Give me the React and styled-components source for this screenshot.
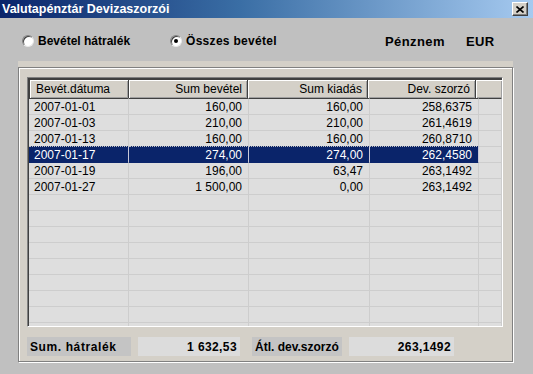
import React from 'react';
import styled, { createGlobalStyle } from 'styled-components';

const GlobalStyle = createGlobalStyle`
  * {
    margin: 0;
    padding: 0;
    box-sizing: border-box;
  }

  body {
    background: #c0c0c0;
    font-family: 'Liberation Sans', Arial, sans-serif;
  }
`;

const Window = styled.div`
  width: 533px;
  height: 374px;
  background: #c0c0c0;
  display: flex;
  flex-direction: column;
  overflow: hidden;
`;

const TitleBar = styled.div`
  height: 18px;
  background: linear-gradient(90deg, #0a246a 0%, #3a6ea5 45%, #a6caf0 100%);
  display: flex;
  align-items: center;
  justify-content: space-between;
  padding: 0 5px 0 2px;
  color: #fff;
  font-weight: bold;
  font-size: 12.5px;
`;

const CloseButton = styled.div`
  width: 16px;
  height: 14px;
  background: #d4d0c8;
  border: 1px solid;
  border-color: #fff #404040 #404040 #fff;
  box-shadow: inset -1px -1px 0 #808080;
  display: flex;
  align-items: center;
  justify-content: center;
`;

const Body = styled.div`
  flex: 1;
  display: flex;
  flex-direction: column;
  padding: 15px 0 0 18px;
`;

const RadioRow = styled.div`
  height: 16px;
  display: flex;
  align-items: center;
  padding-left: 4px;
  margin-bottom: 12px;
  font-size: 12px;
  font-weight: bold;
  color: #000;
`;

const RadioItem = styled.label`
  display: flex;
  align-items: center;
  gap: 4px;
  width: ${p => p.width}px;
  letter-spacing: ${p => p.spacing || 0}px;
`;

const RadioCircle = styled.span`
  width: 12px;
  height: 12px;
  border-radius: 50%;
  background: #fff;
  border: 1px solid;
  border-color: #808080 #e8e8e8 #e8e8e8 #808080;
  box-shadow: inset 1px 1px 0 #404040;
  display: flex;
  align-items: center;
  justify-content: center;

  &::after {
    content: '';
    width: 4px;
    height: 4px;
    border-radius: 50%;
    background: ${p => (p.checked ? '#000' : 'transparent')};
  }
`;

const Currency = styled.div`
  margin-left: auto;
  display: flex;
  gap: 21px;
  width: 148px;
  font-size: 13px;
  letter-spacing: 0.4px;
`;

const Panel = styled.div`
  width: 495px;
  height: 301px;
  background: #d4d0c8;
  padding-top: 6px;
  display: flex;
  flex-direction: column;
`;

const Frame = styled.div`
  flex: 1;
  border: 1px solid #808080;
  box-shadow: inset 1px 1px 0 #fff, 1px 1px 0 #fff;
  padding: 9px 9px 0 8px;
  display: flex;
  flex-direction: column;
`;

const Grid = styled.div`
  width: 476px;
  height: 250px;
  border: 1px solid;
  border-color: #808080 #fff #fff #808080;
  box-shadow: inset 1px 1px 0 #404040;
  padding: 1px 0 0 1px;
  background: #dedede;
  overflow: hidden;
  font-size: 12px;
`;

const Row = styled.div`
  display: flex;
  height: ${p => (p.header ? 20 : 16)}px;
`;

const HeaderCell = styled.div`
  width: ${p => (p.w ? `${p.w}px` : 'auto')};
  flex: ${p => (p.w ? 'none' : 1)};
  background: #d4d0c8;
  border: 1px solid #404040;
  margin-right: -1px;
  box-shadow: inset 1px 1px 0 #fff, inset -1px -1px 0 #a0a0a0;
  display: flex;
  align-items: center;
  justify-content: ${p => (p.right ? 'flex-end' : 'flex-start')};
  padding: 0 5px 0 6px;
  color: #000;
`;

const Cell = styled.div`
  width: ${p => (p.w ? `${p.w}px` : 'auto')};
  flex: ${p => (p.w ? 'none' : 1)};
  border-right: 1px solid ${p => (p.selected ? '#c8c8d8' : '#cdcdcd')};
  border-bottom: 1px solid ${p => (p.selected ? '#0a246a' : '#cdcdcd')};
  border-top: 1px ${p => (p.selected ? 'dotted #c0c0c0' : 'solid transparent')};
  margin-top: -1px;
  background: ${p => (p.selected ? '#0a246a' : 'transparent')};
  color: ${p => (p.selected ? '#fff' : '#000')};
  display: flex;
  align-items: center;
  justify-content: ${p => (p.right ? 'flex-end' : 'flex-start')};
  padding: 0 6px 0 5px;
  white-space: nowrap;
`;

const SummaryRow = styled.div`
  margin-top: 10px;
  height: 19px;
  display: flex;
  font-size: 12px;
  font-weight: bold;
  color: #000;
`;

const SumLabel = styled.div`
  width: ${p => p.w}px;
  margin-right: ${p => p.gap}px;
  background: #c4c4c4;
  display: flex;
  align-items: center;
  padding-left: 3px;
  letter-spacing: ${p => p.spacing || 0}px;
`;

const SumValue = styled.div`
  width: ${p => p.w}px;
  margin-right: ${p => p.gap}px;
  background: #dcdcdc;
  display: flex;
  align-items: center;
  justify-content: flex-end;
  padding-right: 3px;
  letter-spacing: 0.4px;
`;

const columns = [
  { key: 'date', title: 'Bevét.dátuma', w: 100 },
  { key: 'inc', title: 'Sum bevétel', w: 120, right: true },
  { key: 'exp', title: 'Sum kiadás', w: 121, right: true },
  { key: 'rate', title: 'Dev. szorzó', w: 109, right: true },
];

const rows = [
  { date: '2007-01-01', inc: '160,00', exp: '160,00', rate: '258,6375' },
  { date: '2007-01-03', inc: '210,00', exp: '210,00', rate: '261,4619' },
  { date: '2007-01-13', inc: '160,00', exp: '160,00', rate: '260,8710' },
  { date: '2007-01-17', inc: '274,00', exp: '274,00', rate: '262,4580', selected: true },
  { date: '2007-01-19', inc: '196,00', exp: '63,47', rate: '263,1492' },
  { date: '2007-01-27', inc: '1 500,00', exp: '0,00', rate: '263,1492' },
];

const emptyRows = Array.from({ length: 9 }, () => ({}));

const App = () => {
  return (
    <>
      <GlobalStyle />
      <Window>
        <TitleBar>
          <span>Valutapénztár Devizaszorzói</span>
          <CloseButton>
            <svg width="8" height="7" viewBox="0 0 8 7">
              <path d="M0.5 0.5 L7.5 6.5 M7.5 0.5 L0.5 6.5" stroke="#000" strokeWidth="1.6" />
            </svg>
          </CloseButton>
        </TitleBar>

        <Body>
          <RadioRow>
            <RadioItem width={148}>
              <RadioCircle />
              Bevétel hátralék
            </RadioItem>
            <RadioItem width={160} spacing={0.3}>
              <RadioCircle checked />
              Összes bevétel
            </RadioItem>
            <Currency>
              <span>Pénznem</span>
              <span>EUR</span>
            </Currency>
          </RadioRow>

          <Panel>
            <Frame>
              <Grid>
                <Row header>
                  {columns.map(c => (
                    <HeaderCell key={c.key} w={c.w} right={c.right}>
                      {c.title}
                    </HeaderCell>
                  ))}
                  <HeaderCell />
                </Row>
                {[...rows, ...emptyRows].map((r, i) => (
                  <Row key={i}>
                    {columns.map(c => (
                      <Cell key={c.key} w={c.w} right={c.right} selected={r.selected}>
                        {r[c.key]}
                      </Cell>
                    ))}
                    <Cell />
                  </Row>
                ))}
              </Grid>

              <SummaryRow>
                <SumLabel w={104} gap={7} spacing={0.6}>Sum. hátralék</SumLabel>
                <SumValue w={102} gap={12}>1 632,53</SumValue>
                <SumLabel w={90} gap={7}>Átl. dev.szorzó</SumLabel>
                <SumValue w={105} gap={0}>263,1492</SumValue>
              </SummaryRow>
            </Frame>
          </Panel>
        </Body>
      </Window>
    </>
  );
};

export default App;
